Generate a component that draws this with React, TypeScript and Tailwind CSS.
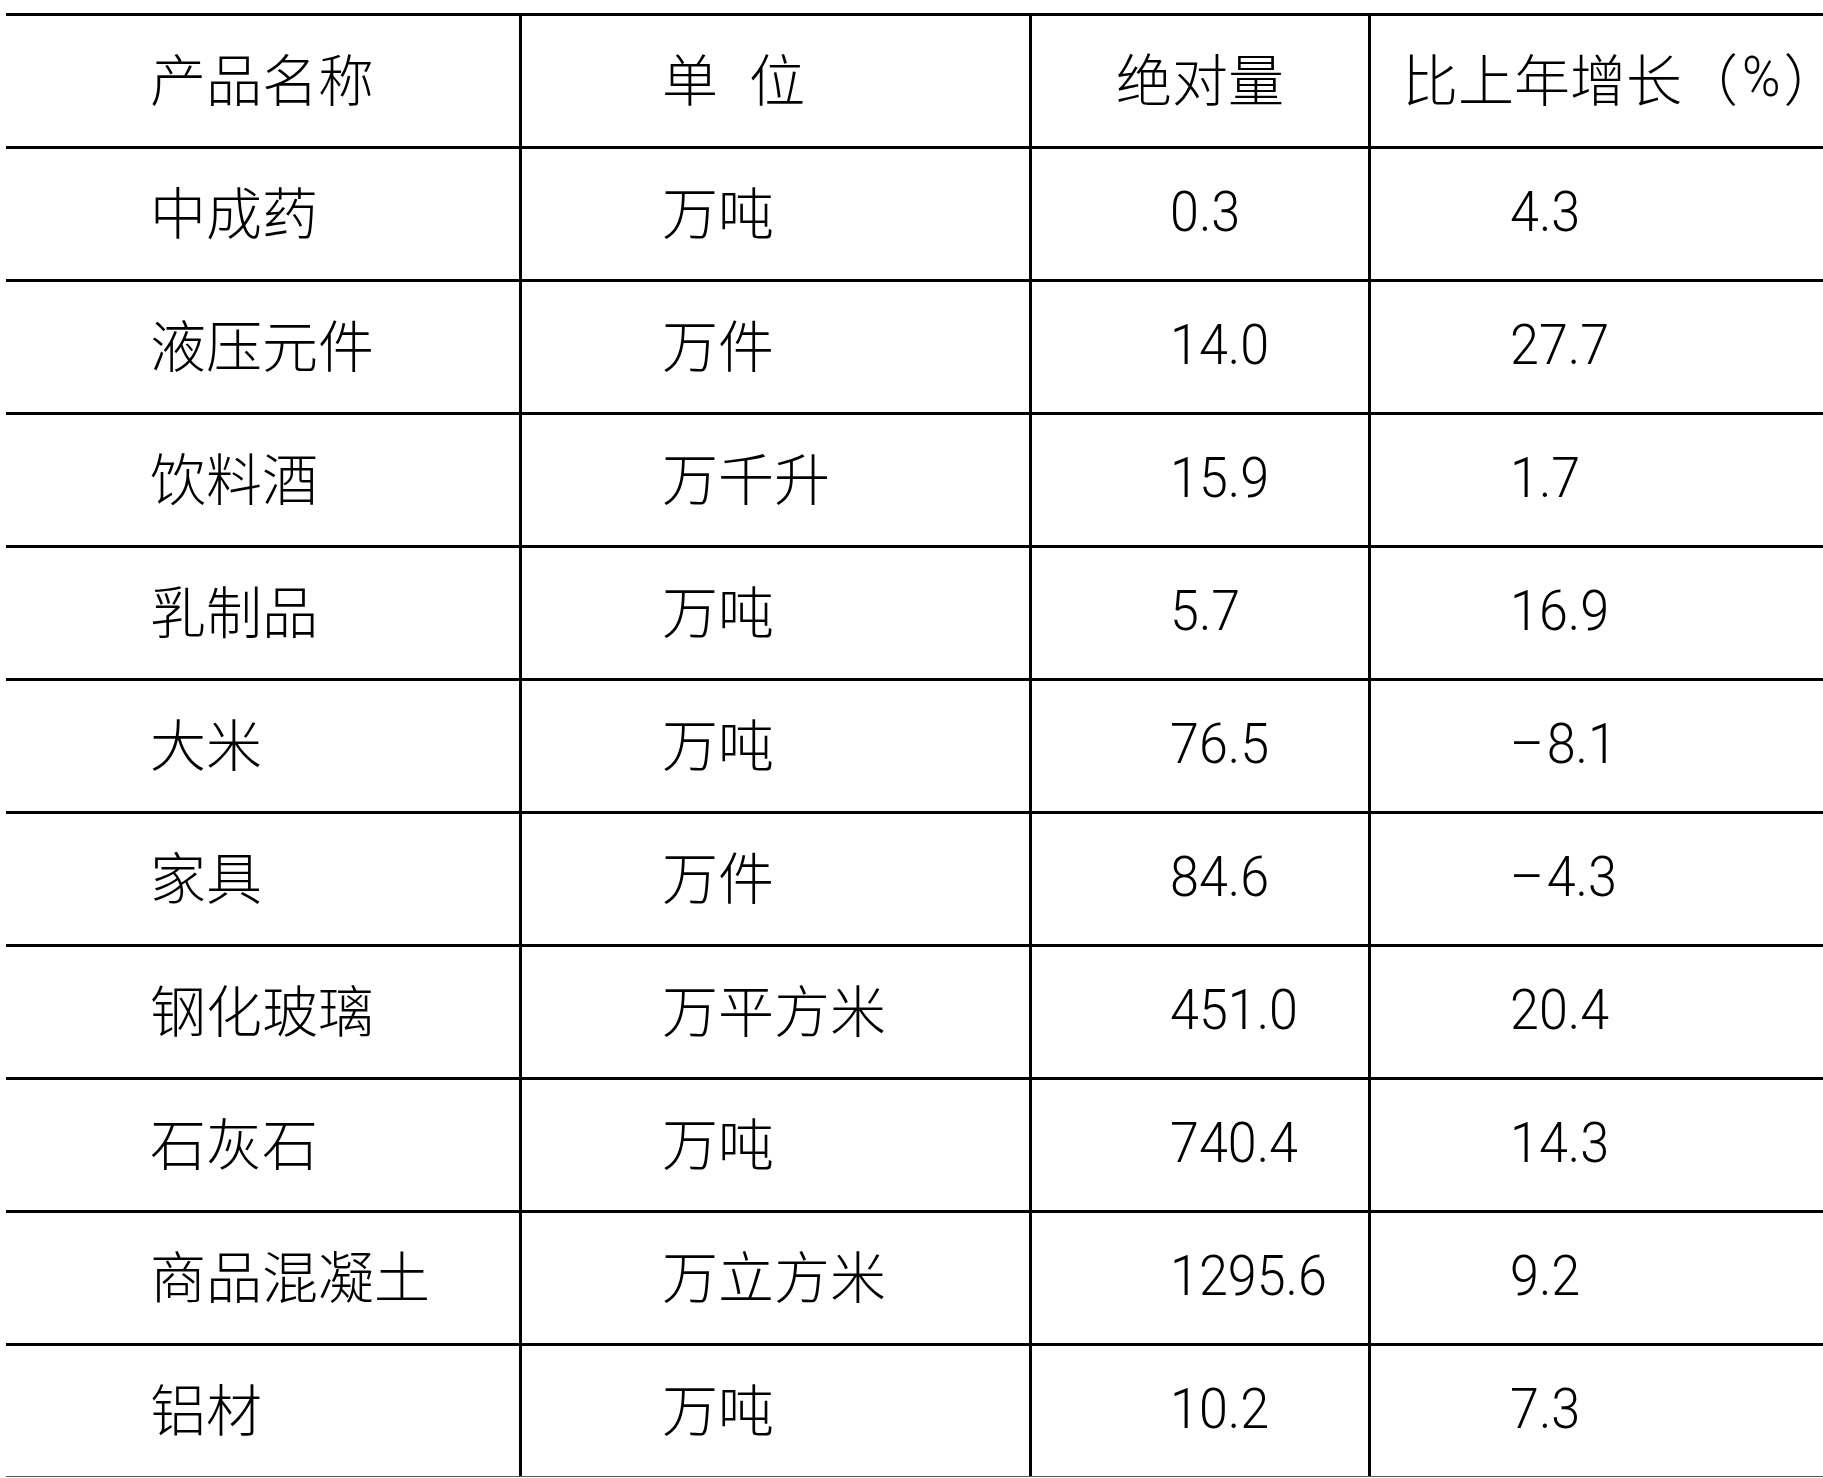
const rows: [string, string, string, string][] = [
  ['中成药', '万吨', '0.3', '4.3'],
  ['液压元件', '万件', '14.0', '27.7'],
  ['饮料酒', '万千升', '15.9', '1.7'],
  ['乳制品', '万吨', '5.7', '16.9'],
  ['大米', '万吨', '76.5', '−8.1'],
  ['家具', '万件', '84.6', '−4.3'],
  ['钢化玻璃', '万平方米', '451.0', '20.4'],
  ['石灰石', '万吨', '740.4', '14.3'],
  ['商品混凝土', '万立方米', '1295.6', '9.2'],
  ['铝材', '万吨', '10.2', '7.3'],
];

const cjk = "pb-[8px] text-[56px] font-light [font-family:'Noto_Sans_CJK_SC',sans-serif]";
// numbers are a thin, slightly condensed sans in the source
const num =
  "inline-block origin-left scale-x-[0.93] text-[56px] font-light [font-family:Roboto,'Liberation_Sans',sans-serif]";

function Num({ value }: { value: string }) {
  // the source uses a long thin minus; Roboto's en dash has that shape
  const neg = value.startsWith('−');
  return (
    <span className={num}>
      {neg && <span className="mr-[3px]">–</span>}
      {neg ? value.slice(1) : value}
    </span>
  );
}

function Cell({
  children,
  first = false,
  className = '',
}: {
  children: React.ReactNode;
  first?: boolean;
  className?: string;
}) {
  return (
    <div
      className={`flex h-[133px] items-center whitespace-nowrap border-t-[3px] border-black leading-none text-black ${
        first ? '' : 'border-l-[3px]'
      } ${className}`}
    >
      {children}
    </div>
  );
}

export default function App() {
  return (
    <div className="min-h-screen bg-white pl-[6px] pt-[13px]">
      <div className="grid grid-cols-[513px_510px_339px_455px]">
        {/* header */}
        <Cell first className={`pl-[144px] ${cjk}`}>产品名称</Cell>
        <Cell className={`pl-[140px] ${cjk}`}>
          <span>单</span>
          <span className="ml-[31px]">位</span>
        </Cell>
        <Cell className={`justify-center ${cjk}`}>绝对量</Cell>
        <Cell className={`pl-[31px] ${cjk}`}>
          <span>比上年增长（</span>
          <span className={`${num} ml-[4px]`}>%</span>
          <span className="[font-feature-settings:'halt']">）</span>
        </Cell>

        {rows.map(([name, unit, abs, growth]) => (
          <div key={name} className="contents">
            <Cell first className={`pl-[144px] ${cjk}`}>{name}</Cell>
            <Cell className={`pl-[140px] ${cjk}`}>{unit}</Cell>
            <Cell className="pb-[4px] pl-[138px]">
              <Num value={abs} />
            </Cell>
            <Cell className="pb-[4px] pl-[139px]">
              <Num value={growth} />
            </Cell>
          </div>
        ))}
      </div>
      <div className="h-px bg-[#555555]" />
    </div>
  );
}
